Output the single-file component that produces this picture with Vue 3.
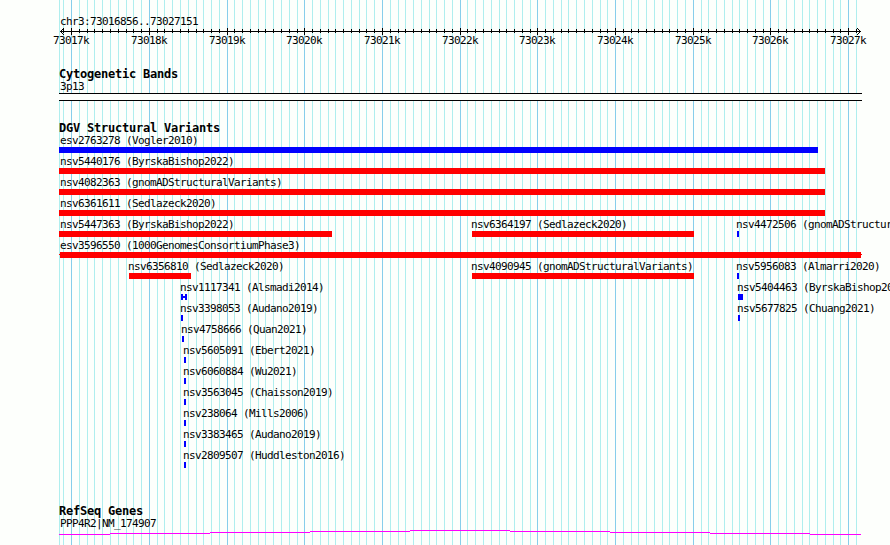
<template>
  <div class="browser">
    <!-- vertical guide lines behind all tracks -->
    <svg class="grid" width="890" height="545" shape-rendering="crispEdges">
      <rect v-for="t in gridLines" :key="t.x" :x="t.x" y="0" width="1" height="545" :class="t.major ? 'major' : 'minor'" />
    </svg>

    <header class="ruler">
      <div class="label region">chr3:73016856..73027151</div>
      <svg class="scale" width="890" height="7" shape-rendering="crispEdges">
        <rect x="60" y="3" width="801" height="1" />
        <rect v-for="t in ticks" :key="t.x" :x="t.x" :y="t.major ? 0 : 1" width="1" :height="t.major ? 7 : 4" />
        <path d="M61 2h1v1h-1zM61 4h1v1h-1zM62 1h1v1h-1zM62 5h1v1h-1zM63 0h1v1h-1zM63 6h1v1h-1z" />
        <path d="M859 2h1v1h-1zM859 4h1v1h-1zM858 1h1v1h-1zM858 5h1v1h-1zM857 0h1v1h-1zM857 6h1v1h-1z" />
      </svg>
      <div class="lane tick-names">
        <span v-for="t in majorTicks" :key="t.x" class="label tick-name" :style="{ left: t.x - 18 + 'px' }">{{ t.name }}</span>
      </div>
    </header>

    <section class="track bands">
      <h3>Cytogenetic Bands</h3>
      <div class="label">3p13</div>
      <div class="band"></div>
    </section>

    <section class="track variants">
      <h3>DGV Structural Variants</h3>
      <div v-for="(row, i) in rows" :key="i" class="lane row">
        <div v-for="f in row" :key="f.name" class="feature" :style="{ left: f.x + 'px' }">
          <span class="label" :class="f.x === 59 ? 'inset' : 'outset'">{{ f.name }}</span>
          <div class="bar" :class="[f.color, f.shape]" :style="{ width: f.w + 'px' }"></div>
        </div>
      </div>
    </section>

    <section class="track genes">
      <h3>RefSeq Genes</h3>
      <div class="label">PPP4R2|NM_174907</div>
      <svg class="intron" width="890" height="5" shape-rendering="crispEdges">
        <rect v-for="s in intron" :key="s[0]" :x="s[0]" :y="s[2]" :width="s[1] - s[0]" height="1" />
      </svg>
    </section>
  </div>
</template>

<script setup>
const start = 73016856
const end = 73027151

// genome position -> pixel
const toX = (pos) => Math.round(60 + ((pos - start) * 800) / (end - start + 1))

const ticks = []
for (let pos = 73016900; pos <= end; pos += 100) {
  ticks.push({ x: toX(pos), major: pos % 1000 === 0, name: pos / 1000 + 'k' })
}
const majorTicks = ticks.filter((t) => t.major)
const gridLines = [{ x: 59, major: false }, ...ticks]

const bar = (name, x, w, color = 'red', shape = '') => ({ name, x, w, color, shape })

const rows = [
  [bar('esv2763278 (Vogler2010)', 59, 759, 'blue')],
  [bar('nsv5440176 (ByrskaBishop2022)', 59, 766)],
  [bar('nsv4082363 (gnomADStructuralVariants)', 59, 766)],
  [bar('nsv6361611 (Sedlazeck2020)', 59, 766)],
  [
    bar('nsv5447363 (ByrskaBishop2022)', 59, 273),
    bar('nsv6364197 (Sedlazeck2020)', 472, 222),
    bar('nsv4472506 (gnomADStructuralVariants)', 737, 2, 'blue'),
  ],
  [bar('esv3596550 (1000GenomesConsortiumPhase3)', 59, 803, 'red', 'open')],
  [
    bar('nsv6356810 (Sedlazeck2020)', 129, 62),
    bar('nsv4090945 (gnomADStructuralVariants)', 472, 222),
    bar('nsv5956083 (Almarri2020)', 737, 2, 'blue'),
  ],
  [
    bar('nsv1117341 (Alsmadi2014)', 181, 6, 'blue', 'span'),
    bar('nsv5404463 (ByrskaBishop2022)', 738, 5, 'blue'),
  ],
  [
    bar('nsv3398053 (Audano2019)', 181, 2, 'blue'),
    bar('nsv5677825 (Chuang2021)', 738, 2, 'blue'),
  ],
  [bar('nsv4758666 (Quan2021)', 182, 2, 'blue')],
  [bar('nsv5605091 (Ebert2021)', 184, 2, 'blue')],
  [bar('nsv6060884 (Wu2021)', 184, 2, 'blue')],
  [bar('nsv3563045 (Chaisson2019)', 184, 2, 'blue')],
  [bar('nsv238064 (Mills2006)', 184, 2, 'blue')],
  [bar('nsv3383465 (Audano2019)', 184, 2, 'blue')],
  [bar('nsv2809507 (Huddleston2016)', 184, 2, 'blue')],
]

// from x, to x, y
const intron = [
  [59, 110, 4],
  [110, 210, 3],
  [210, 310, 2],
  [310, 410, 1],
  [410, 510, 0],
  [510, 610, 1],
  [610, 710, 2],
  [710, 810, 3],
  [810, 861, 4],
]
</script>

<style>
body {
  background: #fdfffc;
}
</style>

<style scoped>
.browser {
  position: relative;
  width: 890px;
  height: 545px;
  overflow: hidden;
  color: #000;
  font-family: "DejaVu Sans Mono", "Liberation Mono", monospace;
}

svg {
  display: block;
}

.grid {
  position: absolute;
  top: 0;
  left: 0;
}

.grid .minor {
  fill: #afeeee;
}

.grid .major {
  fill: #87ceeb;
}

.label {
  display: block;
  height: 12px;
  font-size: 11px;
  line-height: 12px;
  letter-spacing: -0.622px;
  white-space: nowrap;
}

.ruler {
  position: relative;
  height: 52px;
  padding-top: 16px;
}

.region {
  padding-left: 60px;
}

.lane {
  position: relative;
}

.tick-name {
  position: absolute;
  top: 0;
}

.track {
  position: relative;
}

.track > .label {
  padding-left: 60px;
}

h3 {
  height: 13px;
  margin: 0;
  padding-left: 59px;
  font-size: 12px;
  line-height: 13px;
  font-weight: bold;
  letter-spacing: -0.224px;
}

.bands {
  height: 54px;
}

.band {
  width: 803px;
  height: 8px;
  margin-left: 59px;
  box-sizing: border-box;
  border: solid #000;
  border-width: 1px 0;
  background: #fdfffc;
}

.variants {
  height: 383px;
}

.row {
  height: 21px;
}

.feature {
  position: absolute;
  top: 0;
}

.inset {
  padding-left: 1px;
}

.outset {
  margin-left: -1px;
}

.bar {
  height: 6px;
}

.red {
  background: #f00;
}

.blue {
  background: #00f;
}

/* feature continues past both edges of the view */
.open {
  background:
    linear-gradient(#f00, #f00) 1px 0 / 801px 6px no-repeat,
    linear-gradient(#f00, #f00) 0 2px / 803px 1px no-repeat;
}

/* two end blocks joined in the middle */
.span {
  background:
    linear-gradient(#00f, #00f) 0 0 / 2px 6px no-repeat,
    linear-gradient(#00f, #00f) 4px 0 / 2px 6px no-repeat,
    linear-gradient(#00f, #00f) 0 2px / 6px 2px no-repeat;
}

.intron {
  fill: #f0f;
}
</style>
